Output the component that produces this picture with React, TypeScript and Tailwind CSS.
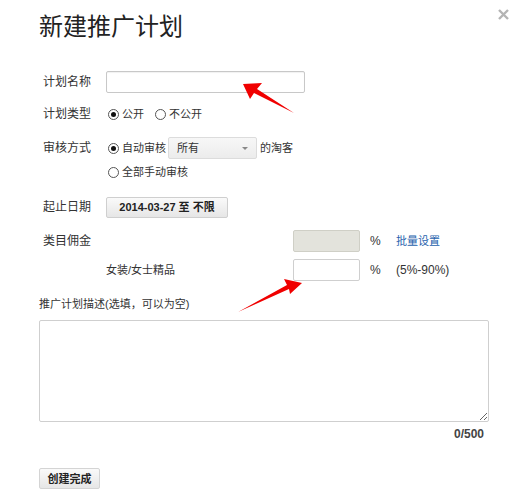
import { useState } from "react";

const font = { fontFamily: '"Liberation Sans", "Noto Sans CJK SC", sans-serif' };

function Radio({ checked, label }: { checked?: boolean; label: string }) {
  return (
    <span className="flex items-center">
      <span className="flex h-[11px] w-[11px] items-center justify-center rounded-full border border-[#555] bg-white">
        {checked ? <span className="h-[5px] w-[5px] rounded-full bg-[#111]" /> : null}
      </span>
      <span className="ml-[3px] text-[11px]">{label}</span>
    </span>
  );
}

function Arrows() {
  return (
    <svg
      className="pointer-events-none absolute inset-0"
      width={511}
      height={504}
      viewBox="0 0 511 504"
    >
      <polygon points="243,84 262,83 257,89 294,113 254,93 250,99" fill="#f00000" />
      <polygon points="302,283 290,294 289,289 238,312 287,285 284,279" fill="#f00000" />
    </svg>
  );
}

export default function App() {
  const [desc, setDesc] = useState("");

  return (
    <div
      className="relative h-[504px] w-[511px] overflow-hidden bg-white text-[12px] leading-[16px] text-[#333]"
      style={font}
    >
      <svg className="absolute left-[498px] top-[9px]" width={11} height={11} viewBox="0 0 11 11">
        <path d="M1 1 L10 10 M10 1 L1 10" stroke="#b4b4b4" strokeWidth={2.4} />
      </svg>

      <h1 className="pl-[39px] pt-[12px] text-[24px] font-normal leading-[30px] text-[#222]">
        新建推广计划
      </h1>

      <div className="pl-[43px]">
        <div className="mt-[29px] flex h-[22px] items-center">
          <span className="w-[63px]">计划名称</span>
          <div className="h-[22px] w-[199px] rounded-[2px] border border-[#c8c8c8] bg-white shadow-[inset_0_1px_1px_rgba(0,0,0,0.06)]" />
        </div>

        <div className="mt-[10px] flex h-[22px] items-center">
          <span className="w-[65px]">计划类型</span>
          <Radio checked label="公开" />
          <span className="ml-[11px]">
            <Radio label="不公开" />
          </span>
        </div>

        <div className="mt-[12px] flex h-[22px] items-center">
          <span className="w-[65px]">审核方式</span>
          <Radio checked label="自动审核" />
          <div className="ml-[2px] flex h-[22px] w-[89px] items-center justify-between rounded-[2px] border border-[#dcdcdc] bg-gradient-to-b from-[#f7f7f7] to-[#ececec] pl-[8px] pr-[8px] text-[11px]">
            <span>所有</span>
            <span className="h-0 w-0 border-x-[3px] border-t-[3px] border-x-transparent border-t-[#888]" />
          </div>
          <span className="ml-[3px] text-[11px]">的淘客</span>
        </div>

        <div className="mt-[2px] flex h-[22px] items-center pl-[65px]">
          <Radio label="全部手动审核" />
        </div>

        <div className="mt-[13px] flex h-[22px] items-center">
          <span className="w-[63px]">起止日期</span>
          <button
            type="button"
            className="flex h-[21px] w-[122px] items-center justify-center rounded-[2px] border border-[#cfcfcf] bg-gradient-to-b from-[#fafafa] to-[#e6e6e6] text-[11px] font-bold text-[#222]"
          >
            2014-03-27 至 不限
          </button>
        </div>

        <div className="mt-[12px] flex h-[22px] items-center">
          <span className="w-[250px]">类目佣金</span>
          <div className="h-[22px] w-[67px] rounded-[2px] border border-[#cfcfc6] bg-[#e3e3dc]" />
          <span className="ml-[10px] w-[26px]">%</span>
          <a href="#" className="text-[11px] text-[#2762ad]">
            批量设置
          </a>
        </div>

        <div className="mt-[7px] flex h-[22px] items-center text-[11px]">
          <span className="w-[250px] pl-[63px]">女装/女士精品</span>
          <div className="h-[22px] w-[67px] rounded-[2px] border border-[#cfcfcf] bg-white" />
          <span className="ml-[10px] w-[26px] text-[12px]">%</span>
          <span className="text-[12px]">(5%-90%)</span>
        </div>
      </div>

      <div className="pl-[39px] pr-[22px]">
        <div className="mt-[12px] flex h-[22px] items-center text-[11px]">推广计划描述(选填，可以为空)</div>
        <textarea
          value={desc}
          onChange={(e) => setDesc(e.target.value)}
          className="mt-[5px] block h-[102px] w-[450px] resize rounded-[2px] border border-[#cfcfcf] bg-white outline-none"
        />
        <div className="mt-[4px] flex h-[16px] w-[450px] items-center justify-end pr-[5px] font-bold text-[#444]">
          0/500
        </div>
        <button
          type="button"
          className="mt-[26px] flex h-[21px] w-[61px] items-center justify-center rounded-[2px] border border-[#d4d4d4] bg-gradient-to-b from-[#fafafa] to-[#e6e6e6] text-[11px] font-bold text-[#222]"
        >
          创建完成
        </button>
      </div>

      <Arrows />
    </div>
  );
}
